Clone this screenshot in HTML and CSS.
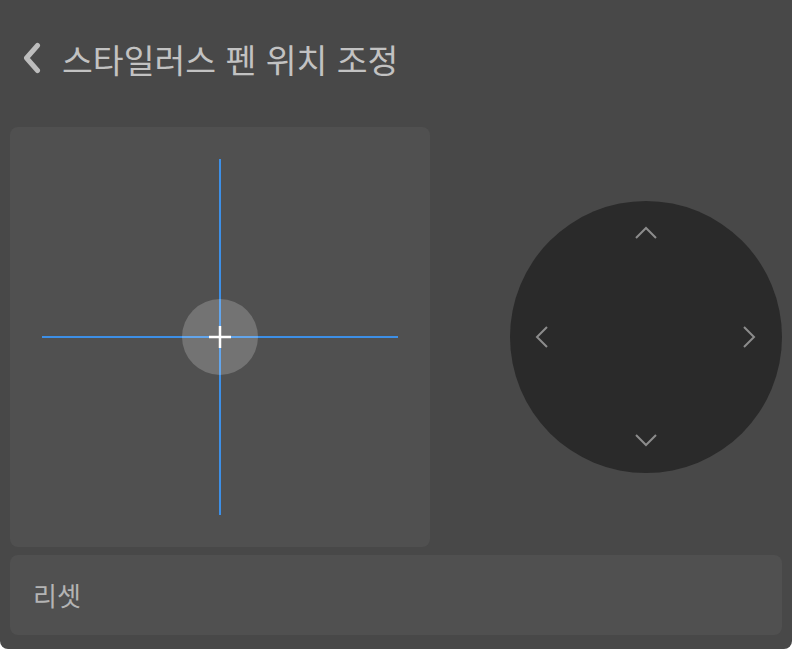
FILE: index.html
```html
<!DOCTYPE html>
<html lang="ko">
<head>
<meta charset="utf-8">
<link rel="stylesheet" href="styles.css">
</head>
<body>
<div class="panel">
  <header class="header">
    <svg class="back" width="20" height="32" viewBox="0 0 20 32"><path d="M15.5 3.5 L4.5 16 L15.5 28.5" fill="none" stroke="#bdbdbd" stroke-width="5" stroke-linecap="round" stroke-linejoin="round"/></svg>
    <h1 class="title">스타일러스 펜 위치 조정</h1>
  </header>
  <main class="main">
    <div class="pad">
      <svg width="420" height="420" viewBox="0 0 420 420">
        <line x1="210" y1="32" x2="210" y2="388" stroke="#3d8fe6" stroke-width="2"/>
        <line x1="32" y1="210" x2="388" y2="210" stroke="#3d8fe6" stroke-width="2"/>
        <circle cx="210" cy="210" r="38" fill="rgba(255,255,255,0.2)"/>
        <line x1="199" y1="210" x2="221" y2="210" stroke="#fff" stroke-width="2.5"/>
        <line x1="210" y1="199" x2="210" y2="221" stroke="#fff" stroke-width="2.5"/>
      </svg>
    </div>
    <div class="dpad-wrap">
      <svg class="dpad" width="272" height="272" viewBox="0 0 272 272">
        <circle cx="136" cy="136" r="136" fill="#2a2a2a"/>
        <g fill="none" stroke="#8c8c8c" stroke-width="2">
          <path d="M126 37 L136 27 L146 37"/>
          <path d="M126 234 L136 244 L146 234"/>
          <path d="M37 126 L27 136 L37 146"/>
          <path d="M234 126 L244 136 L234 146"/>
        </g>
      </svg>
    </div>
  </main>
  <button class="reset">리셋</button>
</div>
</body>
</html>
```
FILE: styles.css
```css
html, body {
  margin: 0;
  padding: 0;
  background: #ffffff;
}
.panel {
  width: 792px;
  height: 649px;
  box-sizing: border-box;
  background: #484848;
  border-radius: 0 0 8px 8px;
  padding: 0 10px 14px 10px;
  display: flex;
  flex-direction: column;
  font-family: "Noto Sans CJK KR", "Noto Sans", sans-serif;
}
.header {
  height: 127px;
  display: flex;
  align-items: center;
  padding-left: 12px;
  padding-bottom: 10px;
  box-sizing: border-box;
  gap: 20px;
}
.back {
  display: block;
  margin-top: -1px;
}
.title {
  margin: 0;
  font-size: 33.5px;
  font-weight: 400;
  color: #c2c2c2;
  line-height: 1;
}
.main {
  display: flex;
  justify-content: space-between;
  align-items: center;
}
.pad {
  width: 420px;
  height: 420px;
  background: #505050;
  border-radius: 8px;
}
.pad svg, .dpad {
  display: block;
}
.reset {
  margin-top: 8px;
  height: 80px;
  border: none;
  border-radius: 8px;
  background: #505050;
  color: #b4b4b4;
  font-family: "Noto Sans CJK KR", "Noto Sans", sans-serif;
  font-size: 26px;
  text-align: left;
  padding: 0 0 2px 23px;
}
```
